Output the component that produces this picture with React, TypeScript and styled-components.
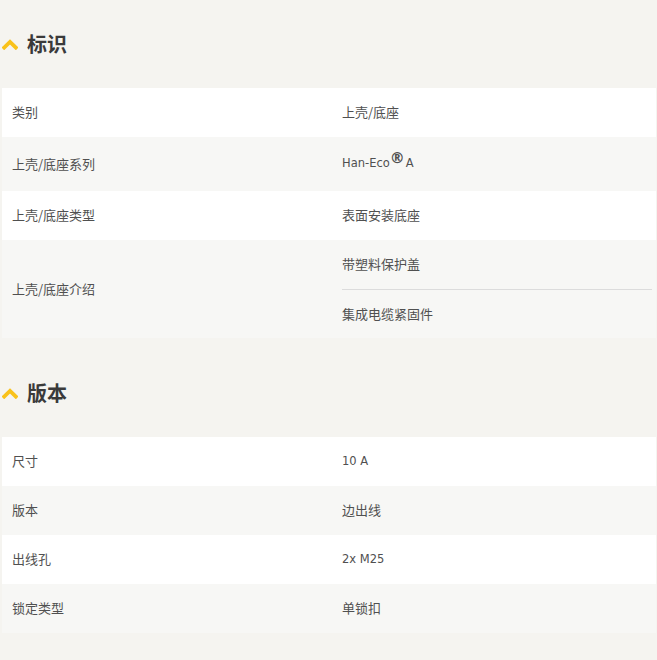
import React from "react";
import styled, { createGlobalStyle } from "styled-components";

const Global = createGlobalStyle`
  html, body { margin: 0; padding: 0; background: #f5f4f0; }
  body { font-family: "Noto Sans CJK SC", "Liberation Sans", sans-serif; }
`;

const Page = styled.div`
  width: 657px;
  min-height: 660px;
  background: #f5f4f0;
  padding-bottom: 28px;
  box-sizing: border-box;
`;

const Section = styled.section<{ $first?: boolean }>`
  margin-top: ${(p) => (p.$first ? 0 : 11)}px;
`;

const Header = styled.div`
  height: 88px;
  display: flex;
  align-items: center;
  gap: 9px;
  padding-left: 2px;
`;

const Title = styled.h2`
  margin: 0;
  font-size: 20px;
  font-weight: 700;
  color: #3a3a3a;
  line-height: 1;
`;

const Table = styled.div`
  margin: 0 1px 0 2px;
  display: flex;
  flex-direction: column;
`;

const Row = styled.div<{ $alt?: boolean; $tall?: boolean }>`
  display: grid;
  grid-template-columns: 327px 1fr;
  background: ${(p) => (p.$alt ? "#f7f7f5" : "#ffffff")};
  min-height: ${(p) => (p.$tall ? 54 : 49)}px;
`;

const Label = styled.div`
  display: flex;
  align-items: center;
  padding-left: 10px;
  padding-bottom: 2px;
  font-size: 13px;
  color: #505050;
`;

const Value = styled.div`
  display: flex;
  align-items: center;
  padding-left: 13px;
  padding-bottom: 2px;
  font-size: 13px;
  color: #505050;
`;

const Latin = styled.span`
  font-family: "DejaVu Sans", "Liberation Sans", sans-serif;
  font-size: 11.5px;
  color: #505050;
`;

const Sup = styled.sup`
  font-size: 15px;
  font-weight: 700;
  line-height: 0;
  position: relative;
  top: 1px;
  margin-right: 1px;
`;

const ValueList = styled.div`
  display: flex;
  flex-direction: column;
  padding-left: 13px;
  padding-right: 4px;
`;

const ValueItem = styled.div<{ $divider?: boolean }>`
  height: 49px;
  display: flex;
  align-items: center;
  padding-bottom: 2px;
  font-size: 13px;
  color: #505050;
  border-top: ${(p) => (p.$divider ? "1px solid #dcdcdc" : "none")};
  box-sizing: border-box;
`;

const Chevron = () => (
  <svg width="16" height="11" viewBox="0 0 16 11" aria-hidden>
    <path d="M2.2 8.6 L8 3 L13.8 8.6" fill="none" stroke="#f9c21b" strokeWidth="3.8" strokeLinecap="square" strokeLinejoin="miter" />
  </svg>
);

export default function App() {
  return (
    <Page>
      <Global />
      <Section $first>
        <Header>
          <Chevron />
          <Title>标识</Title>
        </Header>
        <Table>
          <Row>
            <Label>类别</Label>
            <Value>上壳/底座</Value>
          </Row>
          <Row $alt $tall>
            <Label>上壳/底座系列</Label>
            <Value>
              <Latin>
                Han-Eco<Sup>®</Sup>A
              </Latin>
            </Value>
          </Row>
          <Row>
            <Label>上壳/底座类型</Label>
            <Value>表面安装底座</Value>
          </Row>
          <Row $alt>
            <Label>上壳/底座介绍</Label>
            <ValueList>
              <ValueItem>带塑料保护盖</ValueItem>
              <ValueItem $divider>集成电缆紧固件</ValueItem>
            </ValueList>
          </Row>
        </Table>
      </Section>
      <Section>
        <Header>
          <Chevron />
          <Title>版本</Title>
        </Header>
        <Table>
          <Row>
            <Label>尺寸</Label>
            <Value>
              <Latin>10 A</Latin>
            </Value>
          </Row>
          <Row $alt>
            <Label>版本</Label>
            <Value>边出线</Value>
          </Row>
          <Row>
            <Label>出线孔</Label>
            <Value>
              <Latin>2x M25</Latin>
            </Value>
          </Row>
          <Row $alt>
            <Label>锁定类型</Label>
            <Value>单锁扣</Value>
          </Row>
        </Table>
      </Section>
    </Page>
  );
}
